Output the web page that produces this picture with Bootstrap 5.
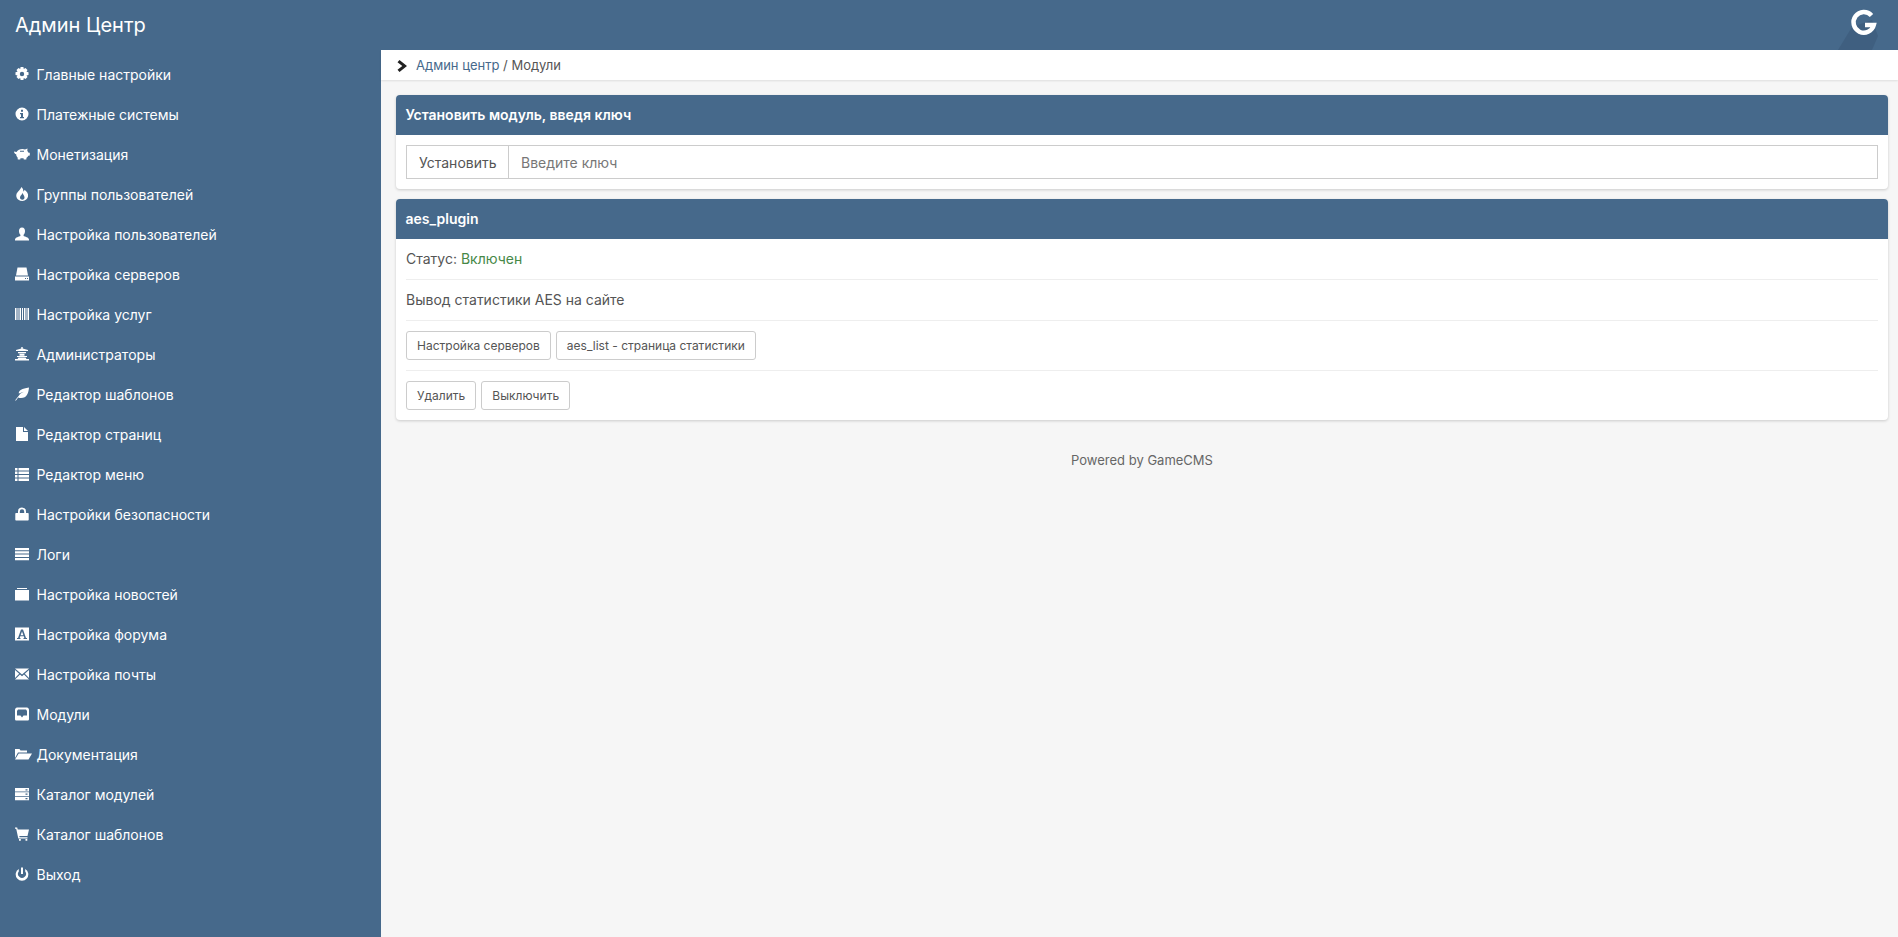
<!DOCTYPE html>
<html lang="ru">
<head>
    <meta charset="UTF-8">
    <meta name="viewport" content="width=device-width, initial-scale=1.0">
    <title>Админ Центр</title>
    <link href="https://cdn.jsdelivr.net/npm/bootstrap@5.3.0/dist/css/bootstrap.min.css" rel="stylesheet">
    <style>
        html, body {
            height: 100%;
        }
        body {
            background-color: #f6f6f6;
            font-family: Inter, "Liberation Sans", sans-serif;
            font-size: 14px;
            color: #555;
            overflow: hidden;
        }
        .top-bar {
            height: 50px;
            background-color: #46698b;
            color: #fff;
            padding: 0 15px;
            overflow: hidden;
        }
        .top-title {
            font-size: 20px;
            line-height: 50px;
            color: #fff;
        }
        .top-logo {
            position: absolute;
            right: 0;
            top: 0;
        }
        .side-menu {
            width: 381px;
            flex: 0 0 381px;
            background-color: #46698b;
            padding-top: 4px;
        }
        .side-link {
            height: 40px;
            padding-left: 15px;
            color: #fff;
            text-decoration: none;
            font-size: 14px;
        }
        .side-link svg {
            width: 14px;
            height: 14px;
            flex: 0 0 14px;
            margin-right: 7.5px;
            fill: #fff;
        }
        .crumbs {
            height: 30px;
            background-color: #fff;
            box-shadow: 0 1px 2px rgba(0, 0, 0, .1);
            padding: 2px 15px 0 16px;
            font-size: 13px;
        }
        .crumbs a {
            color: #46698b;
            text-decoration: none;
        }
        .crumbs svg {
            width: 11px;
            height: 12px;
            margin-right: 8px;
        }
        .panel-box {
            margin: 15px 10px 10px 15px;
            background-color: #fff;
            border-radius: 4px;
            box-shadow: 0 1px 3px rgba(0, 0, 0, .18);
        }
        .panel-box + .panel-box {
            margin-top: 0;
        }
        .panel-head {
            height: 40px;
            line-height: 40px;
            padding: 0 9.5px;
            background-color: #46698b;
            color: #fff;
            font-weight: 600;
            font-size: 14px;
            border-radius: 4px 4px 0 0;
        }
        .panel-body-in {
            padding: 10px;
        }
        .key-group {
            height: 34px;
        }
        .key-group .input-group-text {
            background-color: #fff;
            border-color: #ccc;
            border-radius: 0;
            color: #555;
            font-size: 14px;
            padding: 0 11.5px 0 12px;
        }
        .key-group .form-control {
            border-color: #ccc;
            border-radius: 0;
            font-size: 14px;
            padding: 0 12px;
            color: #555;
        }
        .key-group .form-control::placeholder {
            color: #777;
        }
        .info-row {
            height: 41px;
            line-height: 40px;
            border-bottom: 1px solid #eee;
        }
        .info-row-first {
            height: 31px;
            line-height: 20px;
        }
        .btn-row {
            padding: 10px 0;
            border-bottom: 1px solid #eee;
            gap: 5px;
        }
        .btn-row:last-child {
            border-bottom: 0;
            padding-bottom: 0;
        }
        .btn-plain {
            height: 29px;
            padding: 0 10px;
            font-size: 12px;
            line-height: 27px;
            color: #555;
            background-color: #fff;
            border: 1px solid #ccc;
            border-radius: 3px;
        }
        .status-on {
            color: #468847;
        }
        .foot-line {
            margin-top: 31px;
            padding-left: 5px;
            font-size: 13px;
            color: #666;
        }
    </style>
</head>
<body>

    <!-- Top bar -->
    <div class="top-bar position-relative">
        <span class="top-title">Админ Центр</span>
        <svg class="top-logo" width="118" height="50" viewBox="0 0 118 50">
            <path d="M72 27 L92 20 L98 36 L92 50 L58 50 Z" fill="#3f5f80"/>
            <path d="M91.500 15.500 A10.300 10.300 0 1 0 93.800 25 L85 25" fill="none" stroke="#fff" stroke-width="4.500"/>
        </svg>
    </div>

    <div class="d-flex" style="height: 887px">
        <!-- Sidebar -->
        <nav class="side-menu d-flex flex-column">
            <a href="#" class="side-link d-flex align-items-center"><svg viewBox="0 0 14 14"><path fill-rule="evenodd" d="M5.600 0h2.800l.4 2 1.700-.9 2 2-1 1.600 2 .5v2.800l-2 .4 1 1.700-2 2-1.700-1-.4 2H5.600l-.4-2-1.700 1-2-2 1-1.700-2-.4V5.200l2-.5-1-1.600 2-2 1.700.9zM7 4.800a2.200 2.200 0 1 0 0 4.400a2.200 2.200 0 0 0 0-4.400z"/></svg>Главные настройки</a>
            <a href="#" class="side-link d-flex align-items-center"><svg viewBox="0 0 14 14"><path fill-rule="evenodd" d="M7 .5a6.500 6.500 0 1 0 0 13a6.500 6.500 0 0 0 0-13zM6 2.700h2v2H6zM5 6h3v4h1v1.300H5V10h1V7.300H5z"/></svg>Платежные системы</a>
            <a href="#" class="side-link d-flex align-items-center"><svg viewBox="0 0 14 14" style="overflow: visible"><path fill-rule="evenodd" d="M-1 4.500 L1.500 5 C2.500 3 5 2 7.500 2 C8.500 2 9.300 2.200 10 2.500 L12.500 1.500 L12.300 4 C12.800 4.500 13.300 5 13.500 5.800 L14.800 5.800 L14.800 8.500 L13.300 8.800 C12.800 9.700 12.300 10.300 11.500 10.800 L11.300 12.500 L8.800 12.500 L8.500 11.300 L5.500 11.300 L5.200 12.500 L2.800 12.500 L2.600 10.500 C1.700 9.700 1.200 8.500 1.200 7.300 C0 7 -1 6 -1 4.500 Z M5 3.700 L5 4.700 L9 4.700 L9 3.700 Z"/></svg>Монетизация</a>
            <a href="#" class="side-link d-flex align-items-center"><svg viewBox="0 0 14 14"><path fill-rule="evenodd" d="M6.500 0C8 1.500 8.500 3 8.300 4.500C9 4.200 9.500 3.500 9.500 2.800C12 4.500 13.500 6.800 13 9.500C12.500 12 10.500 13.800 7.500 14C6 14 4.500 13.500 3 12.500C1.300 11 .7 8.500 1.800 6.300C2.500 5 3.800 4 4.500 3C5.300 2 6 1 6.500 0zM7.500 5.800C7.700 7.300 5 8.500 5 10.500C5 11.800 6 12.700 7.300 12.700C8.700 12.700 9.700 11.700 9.500 10.300C9.300 8.500 8 7.500 7.500 5.800z"/></svg>Группы пользователей</a>
            <a href="#" class="side-link d-flex align-items-center"><svg viewBox="0 0 14 14"><path d="M7 .5C9.200.5 10.200 2.200 10 4.500C9.900 6 9.300 7 8.600 7.800V9C10 9.700 13.500 10.200 14 12.500V13.500H0V12.500C.5 10.200 4 9.700 5.400 9V7.800C4.700 7 4.100 6 4 4.500C3.800 2.200 4.800.5 7 .5z"/></svg>Настройка пользователей</a>
            <a href="#" class="side-link d-flex align-items-center"><svg viewBox="0 0 14 14"><path fill-rule="evenodd" d="M2.500 .5h9L13 8.500H1zM0 9.500h14v4H0zM10 11h1v1h-1zM12 11h1v1h-1z"/></svg>Настройка серверов</a>
            <a href="#" class="side-link d-flex align-items-center"><svg viewBox="0 0 14 14"><path d="M0 1h1.500v12H0zM2.500 1h1v12h-1zM4.500 1h1.500v12H4.500zM7 1h1v12H7zM9 1h1.500v12H9zM11.500 1h1v12h-1zM13 1h1v12h-1z"/></svg>Настройка услуг</a>
            <a href="#" class="side-link d-flex align-items-center"><svg viewBox="0 0 14 14"><path d="M6.300 0h1.400v1.500L13 3v1H1V3l5.300-1.500zM3 5h8v1.200H3zM4.500 6.700h5v2h-5zM2 9h10v1H2zM3.500 10.500h7l1 1.500H14v1.500H0V12h2.500z"/></svg>Администраторы</a>
            <a href="#" class="side-link d-flex align-items-center"><svg viewBox="0 0 14 14"><path d="M14 .5C13.500 6 12 11 6 11c-1 0-2-.2-2.800-.6L1 13.500H0L5.500 6.500 L9 4.800 L3.800 6.500C3.500 3.500 7 1.500 14 .5z"/></svg>Редактор шаблонов</a>
            <a href="#" class="side-link d-flex align-items-center"><svg viewBox="0 0 14 14"><path d="M1 0h7v5h5v9H1zM9 0l4 4H9z"/></svg>Редактор страниц</a>
            <a href="#" class="side-link d-flex align-items-center"><svg viewBox="0 0 14 14"><path d="M0 1h2.500v2.500H0zM3.500 1H14v2.500H3.500zM0 4.500h2.500V7H0zM3.500 4.500H14V7H3.500zM0 8h2.500v2.500H0zM3.500 8H14v2.500H3.500zM0 11.500h2.500V14H0zM3.500 11.500H14V14H3.500z"/></svg>Редактор меню</a>
            <a href="#" class="side-link d-flex align-items-center"><svg viewBox="0 0 14 14"><path fill-rule="evenodd" d="M7 .5a4 4 0 0 1 4 4V6h2c.4 0 .7.300.7.700v6c0 .4-.3.800-.7.800H1c-.4 0-.7-.4-.7-.8v-6c0-.4.300-.7.700-.7h2V4.500a4 4 0 0 1 4-4zM7 2.300a2.200 2.200 0 0 0-2.200 2.200V6h4.400V4.500A2.200 2.200 0 0 0 7 2.300z"/></svg>Настройки безопасности</a>
            <a href="#" class="side-link d-flex align-items-center"><svg viewBox="0 0 14 14"><path d="M0 1h14v2.300H0zM0 4.300h14v2.300H0zM0 7.600h14v2.300H0zM0 10.900h14v2.300H0z"/></svg>Логи</a>
            <a href="#" class="side-link d-flex align-items-center"><svg viewBox="0 0 14 14"><path d="M2 1h10v1H2zM0 3h14v10.500H0z"/></svg>Настройка новостей</a>
            <a href="#" class="side-link d-flex align-items-center"><svg viewBox="0 0 14 14"><path fill-rule="evenodd" d="M0 .5h14v13H0zM6 2.500L3 11H2v1h3.500v-1H4.700l.5-1.800h3.600l.5 1.800H8.500v1H12v-1h-1L8 2.500zM7 4.500l1.400 3.700H5.600z"/></svg>Настройка форума</a>
            <a href="#" class="side-link d-flex align-items-center"><svg viewBox="0 0 14 14"><path d="M0 1.500h14L7 7.500zM0 3l4.200 3.700L0 11zM14 3l-4.200 3.700L14 11zM5 7.500L7 9.200 9 7.500l5 5H0z"/></svg>Настройка почты</a>
            <a href="#" class="side-link d-flex align-items-center"><svg viewBox="0 0 14 14"><path fill-rule="evenodd" d="M2 .5h10c1 0 2 1 2 2.500v9c0 1-.6 1.500-1.500 1.500h-11C.6 13.500 0 13 0 12V3C0 1.500 1 .5 2 .5zM3 2.500L2 4v4.500h3.500L7 10.500l1.500-2H12V4l-1-1.500z"/></svg>Модули</a>
            <a href="#" class="side-link d-flex align-items-center"><svg viewBox="0 0 14 14" style="overflow: visible"><path d="M0 2h4.500l1 1.500H12V5.500H3L0 11zM3.700 6.500H17L13.500 12.500H0z"/></svg>Документация</a>
            <a href="#" class="side-link d-flex align-items-center"><svg viewBox="0 0 14 14"><path fill-rule="evenodd" d="M0 1h14v3.500H0zM0 5.300h14V9H0zM0 9.800h14v3.500H0zM10.500 6.500v1.200h2V6.500zM10.500 11v1.200h2V11zM10.500 2.200v1.200h2V2.200z"/></svg>Каталог модулей</a>
            <a href="#" class="side-link d-flex align-items-center"><svg viewBox="0 0 14 14"><path d="M0 .5h2.200l.5 2H14l-1.500 6.500H4.300l.3 1.200H12.500V11.500H3.300L1.200 1.800H0zM4 12h1.800v1.800H4zM10.500 12h1.800v1.800h-1.800z"/></svg>Каталог шаблонов</a>
            <a href="#" class="side-link d-flex align-items-center"><svg viewBox="0 0 14 14"><path d="M6 .5h2V7H6zM3.800 2v2.400A4 4 0 1 0 10.200 4.400V2a6.300 6.300 0 1 1-6.400 0z"/></svg>Выход</a>
        </nav>

        <!-- Content -->
        <main class="flex-grow-1">
            <div class="crumbs d-flex align-items-center">
                <svg viewBox="0 0 11 12"><path d="M2.500 0 L10 6 L2.500 12 L.5 9.800 L5.300 6 L.5 2.200 Z" fill="#222"/></svg>
                <a href="#">Админ центр</a><span>&nbsp;/ Модули</span>
            </div>

            <div class="panel-box">
                <div class="panel-head">Установить модуль, введя ключ</div>
                <div class="panel-body-in">
                    <div class="input-group key-group">
                        <span class="input-group-text">Установить</span>
                        <input type="text" class="form-control" placeholder="Введите ключ">
                    </div>
                </div>
            </div>

            <div class="panel-box">
                <div class="panel-head">aes_plugin</div>
                <div class="panel-body-in">
                    <div class="info-row info-row-first">Статус: <span class="status-on">Включен</span></div>
                    <div class="info-row">Вывод статистики AES на сайте</div>
                    <div class="btn-row d-flex">
                        <button type="button" class="btn-plain">Настройка серверов</button>
                        <button type="button" class="btn-plain">aes_list - страница статистики</button>
                    </div>
                    <div class="btn-row d-flex">
                        <button type="button" class="btn-plain">Удалить</button>
                        <button type="button" class="btn-plain">Выключить</button>
                    </div>
                </div>
            </div>

            <div class="foot-line text-center">Powered by GameCMS</div>
        </main>
    </div>

    <script src="https://cdn.jsdelivr.net/npm/bootstrap@5.3.0/dist/js/bootstrap.bundle.min.js"></script>
</body>
</html>
